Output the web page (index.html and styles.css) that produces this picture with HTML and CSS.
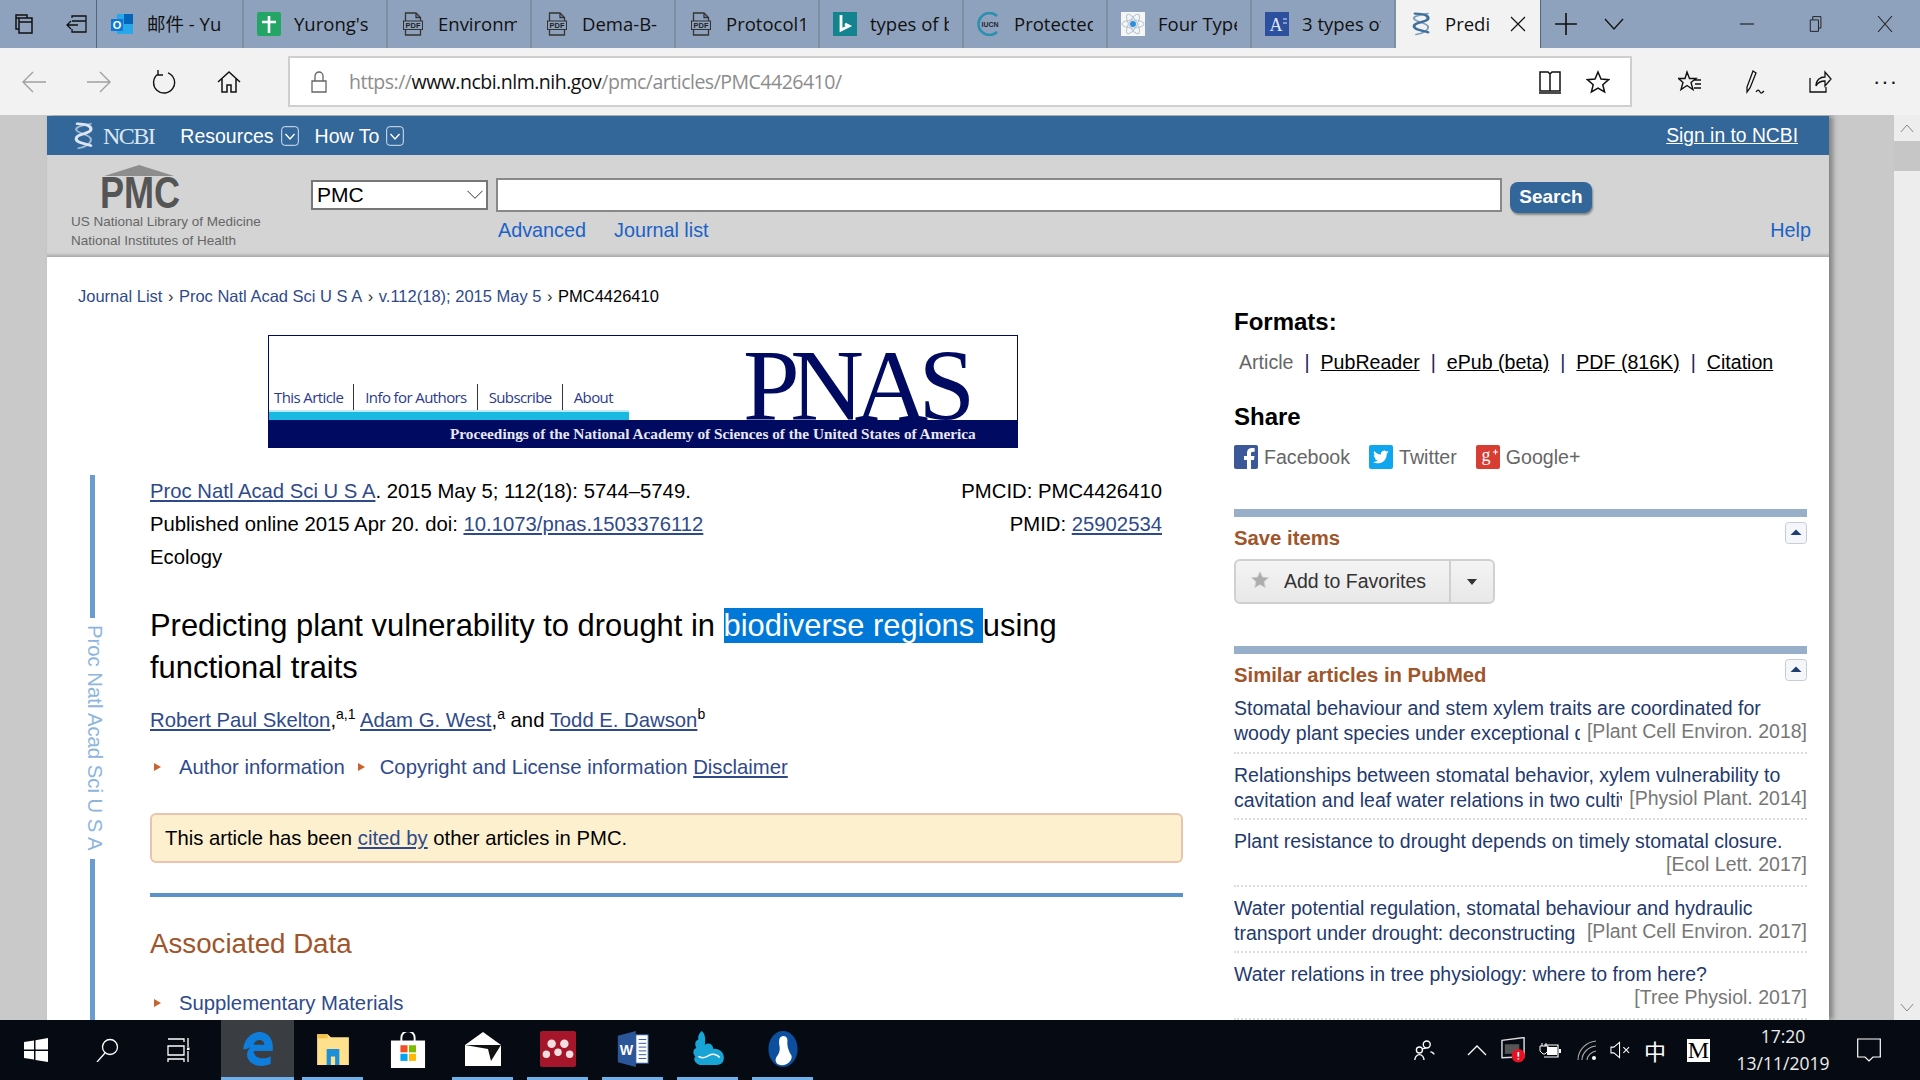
FILE: index.html
```html
<!DOCTYPE html>
<html lang="en">
<head>
    <meta charset="UTF-8">
    <title>Predicting plant vulnerability to drought in biodiverse regions using functional traits</title>
    <link rel="stylesheet" href="styles.css">
</head>
<body>
    <svg class="defs" width="0" height="0">
        <symbol id="pdf" viewBox="0 0 24 24">
            <path d="M4.5 23V1h10.500l4.500 4.500V23z M15 1v4.500h4.500" fill="none" stroke="#333" stroke-width="1.300"/>
            <rect x="2.500" y="9" width="19" height="8.500" fill="#8fa2bd" stroke="#333"/>
            <text x="12" y="15.500" font-size="7.500" font-weight="bold" text-anchor="middle" fill="#222" font-family="Liberation Sans">PDF</text>
        </symbol>
        <symbol id="helix" viewBox="0 0 24 32" preserveAspectRatio="none">
            <path d="M6 2C15 2 20 5 19 9C18 14 5 13 5 19C5 24 13 24 19 27" fill="none" stroke="currentColor" stroke-width="3" stroke-linecap="round"/>
            <path d="M19 2C12 4 4 5 5 9C6 13 17 14 19 19C20 24 14 29 7 30" fill="none" stroke="currentColor" stroke-width="2" stroke-linecap="round" opacity=".65"/>
        </symbol>
        <symbol id="up" viewBox="0 0 22 22">
            <rect x=".5" y=".5" width="21" height="21" rx="3" fill="#f4f6f9" stroke="#c4ccd6"/>
            <path d="M5.500 13L11 7.500l5.500 5.500z" fill="#1d3f72"/>
        </symbol>
    </svg>

    <!-- Browser tabs -->
    <div class="tabbar">
        <div class="tab-tools">
            <svg class="ic24" viewBox="0 0 24 24"><path d="M3 3h11v3H3z M6 6h13v4H6z M6 10h13v11H6z M3 6v11h3" fill="none" stroke="#111" stroke-width="1.500"/></svg>
            <svg class="ic24" viewBox="0 0 24 24"><path d="M7 6V4h14v16H7v-3 M7 9h14 M2 13h11 M6 9l-4 4 4 4" fill="none" stroke="#111" stroke-width="1.300"/></svg>
        </div>
        <div class="tab tab-first">
            <svg class="fav" viewBox="0 0 24 24"><rect x="7" y="2" width="16" height="20" fill="#28a8ea"/><rect x="14" y="2" width="9" height="10" fill="#0364b8"/><rect x="1" y="7" width="12" height="12" fill="#0f78d4"/><text x="7" y="17" font-size="11" font-weight="bold" fill="#fff" text-anchor="middle" font-family="Liberation Sans">O</text></svg>
            <span class="tab-name">邮件 - Yu</span>
        </div>
        <div class="tab">
            <svg class="fav" viewBox="0 0 24 24"><rect width="24" height="24" rx="2" fill="#23a566"/><path d="M12 4v17 M5 10h14" stroke="#fff" stroke-width="2.600"/></svg>
            <span class="tab-name">Yurong's</span>
        </div>
        <div class="tab"><svg class="fav"><use href="#pdf"/></svg><span class="tab-name">Environmental</span></div>
        <div class="tab"><svg class="fav"><use href="#pdf"/></svg><span class="tab-name">Dema-B-</span></div>
        <div class="tab"><svg class="fav"><use href="#pdf"/></svg><span class="tab-name">Protocol1</span></div>
        <div class="tab">
            <svg class="fav" viewBox="0 0 24 24"><rect width="24" height="24" fill="#13848f"/><path d="M8 3v15l8-4-4-2" fill="none" stroke="#fff" stroke-width="2.800"/></svg>
            <span class="tab-name">types of b</span>
        </div>
        <div class="tab">
            <svg class="fav" viewBox="0 0 24 24"><path d="M20 4A11 11 0 1 0 20 20" fill="none" stroke="#2a8fb0" stroke-width="2.500"/><text x="13" y="15" font-size="7" font-weight="bold" text-anchor="middle" fill="#223" font-family="Liberation Sans">IUCN</text></svg>
            <span class="tab-name">Protected</span>
        </div>
        <div class="tab">
            <svg class="fav" viewBox="0 0 24 24"><rect width="24" height="24" fill="#f4f6f8"/><g fill="none" stroke="#b7c3cf"><ellipse cx="12" cy="12" rx="11" ry="4" transform="rotate(60 12 12)"/><ellipse cx="12" cy="12" rx="11" ry="4" transform="rotate(-60 12 12)"/><ellipse cx="12" cy="12" rx="11" ry="4"/></g><circle cx="12" cy="12" r="3" fill="#2b8fe0"/></svg>
            <span class="tab-name">Four Types</span>
        </div>
        <div class="tab">
            <svg class="fav" viewBox="0 0 24 24"><rect width="24" height="24" fill="#2c4f9e"/><text x="11" y="19" font-size="18" fill="#dfe7f5" text-anchor="middle" font-family="Liberation Serif">A</text><path d="M18 7h4M18 11h4" stroke="#dfe7f5"/></svg>
            <span class="tab-name">3 types of</span>
        </div>
        <div class="tab tab-active">
            <svg class="fav helix-fav"><use href="#helix"/></svg>
            <span class="tab-name">Predi</span>
            <svg class="tab-close" viewBox="0 0 16 16"><path d="M1 1l14 14M15 1L1 15" stroke="#111" stroke-width="1.200"/></svg>
        </div>
        <div class="tab-extra">
            <svg class="ic24" viewBox="0 0 22 22"><path d="M11 1v20M1 11h20" stroke="#111" stroke-width="1.500"/></svg>
            <svg class="ic20" viewBox="0 0 20 20"><path d="M1 5l9 10 9-10" fill="none" stroke="#111" stroke-width="1.300"/></svg>
        </div>
        <div class="win-buttons">
            <svg class="ic16" viewBox="0 0 16 16"><path d="M1 8h14" stroke="#222" stroke-width="1.200"/></svg>
            <svg class="ic16" viewBox="0 0 16 22"><path d="M1 6h10v14H1z M4 6V2h10v14h-3" fill="none" stroke="#222" stroke-width="1.200"/></svg>
            <svg class="ic16" viewBox="0 0 16 16"><path d="M1 0l14 16M15 0L1 16" stroke="#222" stroke-width="1.100"/></svg>
        </div>
    </div>

    <!-- Address bar -->
    <div class="toolbar">
        <div class="nav-icons">
            <svg class="ic24" viewBox="0 0 24 24"><path d="M24 12H2M11 2L1 12l10 10" fill="none" stroke="#a0a0a0" stroke-width="1.400"/></svg>
            <svg class="ic24" viewBox="0 0 24 24"><path d="M0 12h22M13 2l10 10-10 10" fill="none" stroke="#a0a0a0" stroke-width="1.400"/></svg>
            <svg class="ic24" viewBox="0 0 24 24"><path d="M6 4A10.500 10.500 0 1 0 16 2.800 M6 0v5h5" fill="none" stroke="#111" stroke-width="1.400"/></svg>
            <svg class="ic24" viewBox="0 0 24 24"><path d="M1 12L12 2l11 10 M5 9v13h5v-7h4v7h5V9" fill="none" stroke="#111" stroke-width="1.500"/></svg>
        </div>
        <div class="address">
            <svg class="lock" viewBox="0 0 16 22"><path d="M1 10h14v11H1z M4 10V5a4 4 0 0 1 8 0v5" fill="none" stroke="#666" stroke-width="1.300"/></svg>
            <span class="url">https://<b>www.ncbi.nlm.nih.gov</b>/pmc/articles/PMC4426410/</span>
            <svg class="ic24 book" viewBox="0 0 24 24"><path d="M2 2h8l2 2 2-2h8v19H2z M12 4v17 M1 23h22" fill="none" stroke="#111" stroke-width="1.500"/></svg>
            <svg class="ic24" viewBox="0 0 24 24"><path d="M12 2l3 7 7.500.7-5.700 5 1.800 7.300-6.600-3.900L5.400 22l1.800-7.300-5.700-5L9 9z" fill="none" stroke="#111" stroke-width="1.500"/></svg>
        </div>
        <div class="tool-icons">
            <svg class="ic24" viewBox="0 0 24 24"><path d="M9 2l2.500 6.500H18l-5 4 2 7-6-4-6 4 2-7-4.500-4h6.500z M16 10h7M17 14h6M16 18h7" fill="none" stroke="#111" stroke-width="1.400"/></svg>
            <svg class="ic24" viewBox="0 0 24 24"><path d="M10 1l3 2-6 15-3 4 0-5z M13 22c2-3 3-2 4 0s2 1 4-1" fill="none" stroke="#111" stroke-width="1.300"/></svg>
            <svg class="ic24" viewBox="0 0 24 24"><path d="M2 8v14h16v-5 M8 16c0-6 4-9 9-9V2l6 7-6 7v-5c-4 0-7 1-9 5z" fill="none" stroke="#111" stroke-width="1.300"/></svg>
            <span class="more">···</span>
        </div>
    </div>

    <div class="viewport">
        <div class="page">
            <!-- NCBI bar -->
            <div class="ncbi-bar">
                <svg class="ncbi-helix"><use href="#helix"/></svg>
                <span class="ncbi-name">NCBI</span>
                <a class="menu">Resources</a>
                <svg class="menu-box" viewBox="0 0 18 20"><rect x=".7" y=".7" width="16.600" height="18.600" rx="3" fill="none" stroke="#dbe6f2"/><path d="M4.500 8l4.500 5 4.500-5" fill="none" stroke="#fff" stroke-width="1.400"/></svg>
                <a class="menu">How To</a>
                <svg class="menu-box" viewBox="0 0 18 20"><rect x=".7" y=".7" width="16.600" height="18.600" rx="3" fill="none" stroke="#dbe6f2"/><path d="M4.500 8l4.500 5 4.500-5" fill="none" stroke="#fff" stroke-width="1.400"/></svg>
                <a class="sign-in">Sign in to NCBI</a>
            </div>

            <!-- PMC search header -->
            <div class="pmc-header">
                <div class="pmc-brand">
                    <div class="pmc-logo">
                        <svg class="pmc-roof" viewBox="0 0 80 12"><path d="M0 12L38 0l38 12z" fill="#8d8d8d"/></svg>
                        <span class="pmc-mark">PMC</span>
                    </div>
                    <div class="pmc-org">US National Library of Medicine</div>
                    <div class="pmc-org">National Institutes of Health</div>
                </div>
                <div class="pmc-search">
                    <div class="search-row">
                        <div class="db-select">PMC
                            <svg class="db-arrow" viewBox="0 0 20 12"><path d="M1 1l9 9 9-9" fill="none" stroke="#333" stroke-width="1.200"/></svg>
                        </div>
                        <div class="search-input"></div>
                        <div class="search-btn">Search</div>
                    </div>
                    <div class="search-links">
                        <a>Advanced</a>
                        <a>Journal list</a>
                        <a class="help">Help</a>
                    </div>
                </div>
            </div>

            <div class="content">
                <div class="main">
                    <div class="crumbs">
                        <a>Journal List</a><i>›</i><a>Proc Natl Acad Sci U S A</a><i>›</i><a>v.112(18); 2015 May 5</a><i>›</i><span>PMC4426410</span>
                    </div>

                    <div class="banner">
                        <div class="banner-top">
                            <div class="banner-nav">
                                <div class="banner-links">
                                    <span>This Article</span><span>Info for Authors</span><span>Subscribe</span><span>About</span>
                                </div>
                                <div class="banner-cyan"></div>
                            </div>
                            <div class="banner-title">PNAS</div>
                        </div>
                        <div class="banner-band">Proceedings of the National Academy of Sciences of the United States of America</div>
                    </div>

                    <div class="article-wrap">
                        <div class="rail">
                            <div class="rail-line rail-top"></div>
                            <div class="rail-text">Proc Natl Acad Sci U S A</div>
                            <div class="rail-line rail-bottom"></div>
                        </div>
                        <div class="article">
                            <div class="cite">
                                <div>
                                    <div><a class="lnk">Proc Natl Acad Sci U S A</a>. 2015 May 5; 112(18): 5744–5749.</div>
                                    <div>Published online 2015 Apr 20. doi: <a class="lnk">10.1073/pnas.1503376112</a></div>
                                    <div>Ecology</div>
                                </div>
                                <div class="cite-ids">
                                    <div>PMCID: PMC4426410</div>
                                    <div>PMID: <a class="lnk">25902534</a></div>
                                </div>
                            </div>
                            <h1 class="title">Predicting plant vulnerability to drought in <span class="sel">biodiverse regions </span>using functional traits</h1>
                            <div class="authors">
                                <a class="lnk">Robert Paul Skelton</a>,<sup>a,1</sup> <a class="lnk">Adam G. West</a>,<sup>a</sup> and <a class="lnk">Todd E. Dawson</a><sup>b</sup>
                            </div>
                            <div class="info-row">
                                <span class="tri"></span><a class="plain info-a">Author information</a>
                                <span class="tri"></span><a class="plain info-b">Copyright and License information</a>&nbsp;<a class="lnk">Disclaimer</a>
                            </div>
                            <div class="notice">This article has been <a class="lnk">cited by</a> other articles in PMC.</div>
                            <div class="section-rule"></div>
                            <h2 class="section-head">Associated Data</h2>
                            <div class="supp"><span class="tri"></span><a class="plain info-a">Supplementary Materials</a></div>
                        </div>
                    </div>
                </div>

                <!-- Right column -->
                <div class="side">
                    <h3 class="side-head formats-head">Formats:</h3>
                    <div class="formats">
                        <span class="fmt-cur">Article</span><i>|</i><a>PubReader</a><i>|</i><a>ePub (beta)</a><i>|</i><a>PDF (816K)</a><i>|</i><a>Citation</a>
                    </div>
                    <h3 class="side-head share-head">Share</h3>
                    <div class="share">
                        <span class="share-item">
                            <svg class="soc" viewBox="0 0 24 24"><rect width="24" height="24" rx="2" fill="#3b5998"/><path d="M17 24v-9h3l.500-4H17V8.500c0-1 .500-1.800 2-1.800h1.700V3.300C20 3.200 19 3 17.800 3 15 3 13 4.800 13 7.800V11h-3v4h3v9z" fill="#fff"/></svg>Facebook</span>
                        <span class="share-item">
                            <svg class="soc" viewBox="0 0 24 24"><rect width="24" height="24" rx="2" fill="#0fa5ef"/><path d="M20 7c-.600.300-1.200.500-1.900.500.700-.400 1.200-1 1.400-1.800-.600.400-1.300.600-2 .800a3.300 3.300 0 0 0-5.600 3C9.200 9.300 6.800 8 5.200 6c-.900 1.500-.400 3.400 1 4.400-.500 0-1-.200-1.500-.400 0 1.600 1.100 3 2.600 3.300-.500.100-1 .100-1.500 0 .400 1.300 1.600 2.200 3.100 2.300-1.400 1.100-3.200 1.600-4.900 1.400 4.900 3.100 13.800 1.200 13.800-8.400.700-.500 1.300-1 1.700-1.600z" fill="#fff"/></svg>Twitter</span>
                        <span class="share-item">
                            <svg class="soc" viewBox="0 0 24 24"><rect width="24" height="24" rx="2" fill="#d73d32"/><text x="10" y="16" font-size="18" fill="#fff" text-anchor="middle" font-family="Liberation Serif">g</text><path d="M17 7h5M19.500 4.500v5" stroke="#fff" stroke-width="1.200"/></svg>Google+</span>
                    </div>

                    <div class="portlet save-portlet">
                        <div class="portlet-head">
                            <span>Save items</span>
                            <svg class="collapse"><use href="#up"/></svg>
                        </div>
                        <div class="fav-btn">
                            <div class="fav-main">
                                <svg class="fav-star" viewBox="0 0 24 24"><path d="M12 1l3.300 7.300 7.700.8-5.800 5.200 1.700 7.700-6.900-4-6.900 4 1.700-7.700L1 9.100l7.700-.8z" fill="#adadad" stroke="#c8c8c8"/></svg>
                                Add to Favorites
                            </div>
                            <div class="fav-drop"><span class="caret"></span></div>
                        </div>
                    </div>

                    <div class="portlet sim-portlet">
                        <div class="portlet-head">
                            <span>Similar articles in PubMed</span>
                            <svg class="collapse"><use href="#up"/></svg>
                        </div>
                        <div class="sim">
                            <a class="sim-line">Stomatal behaviour and stem xylem traits are coordinated for</a>
                            <div class="sim-second"><a class="sim-clip">woody plant species under exceptional drought</a><span class="sim-src">[Plant Cell Environ. 2018]</span></div>
                        </div>
                        <div class="sim">
                            <a class="sim-line">Relationships between stomatal behavior, xylem vulnerability to</a>
                            <div class="sim-second"><a class="sim-clip">cavitation and leaf water relations in two cultivars</a><span class="sim-src">[Physiol Plant. 2014]</span></div>
                        </div>
                        <div class="sim">
                            <a class="sim-line">Plant resistance to drought depends on timely stomatal closure.</a>
                            <div class="sim-second"><span class="sim-clip"></span><span class="sim-src">[Ecol Lett. 2017]</span></div>
                        </div>
                        <div class="sim">
                            <a class="sim-line">Water potential regulation, stomatal behaviour and hydraulic</a>
                            <div class="sim-second"><a class="sim-clip">transport under drought: deconstructing</a><span class="sim-src">[Plant Cell Environ. 2017]</span></div>
                        </div>
                        <div class="sim">
                            <a class="sim-line">Water relations in tree physiology: where to from here?</a>
                            <div class="sim-second"><span class="sim-clip"></span><span class="sim-src">[Tree Physiol. 2017]</span></div>
                        </div>
                    </div>
                </div>
            </div>
        </div>

        <div class="scrollbar">
            <svg class="sb-arrow" viewBox="0 0 16 10"><path d="M1 9l7-8 7 8" fill="none" stroke="#777"/></svg>
            <div class="sb-thumb"></div>
            <svg class="sb-arrow sb-down" viewBox="0 0 16 10"><path d="M1 1l7 8 7-8" fill="none" stroke="#777"/></svg>
        </div>
    </div>

    <!-- Windows taskbar -->
    <div class="taskbar">
        <div class="task-left">
            <svg class="tb-sys" viewBox="0 0 24 24"><path d="M0 4l10-1.500V11.500H0z M11.500 2.300L24 0v11.500H11.500z M0 13h10v8.500L0 20z M11.500 13H24v11l-12.500-2z" fill="#fff"/></svg>
            <svg class="tb-sys" viewBox="0 0 24 24"><circle cx="15" cy="9" r="7.500" fill="none" stroke="#fff" stroke-width="1.300"/><path d="M10 15L2 24" stroke="#fff" stroke-width="1.300"/></svg>
            <svg class="tb-sys" viewBox="0 0 24 24"><path d="M2 1h16v3 M2 8h16v9H2z M2 24v-3h16v3 M22 0v9 M22 13v11" fill="none" stroke="#fff" stroke-width="1.300"/><rect x="21" y="9.500" width="2.500" height="2.500" fill="#fff"/></svg>
        </div>
        <div class="task-app task-edge">
            <svg class="tb-app" viewBox="0 0 30 34"><path d="M1 17C2 6 11 0 18 1c7 1 11 7 11 14v4H11c0 6 8 9 16 5v7c-9 4-19 2-22-6-1-3 0-7 3-10-2 1-5 3-7 2zM11 13h10c0-6-9-6-10 0z" fill="#0f7ddb"/></svg>
        </div>
        <div class="task-app task-on">
            <svg class="tb-app" viewBox="0 0 32 34"><path d="M1 3h10l3 3h17v26H1z" fill="#ffe08c"/><path d="M1 3h10v4H1z" fill="#f0c24a"/><path d="M10 32V17h12v15h-4v-8h-4v8z" fill="#1c8fd8"/></svg>
        </div>
        <div class="task-app">
            <svg class="tb-app" viewBox="0 0 36 38"><path d="M11 10V6a7 7 0 0 1 14 0v4" fill="none" stroke="#fff" stroke-width="2"/><rect y="9" width="36" height="29" fill="#fff"/><rect x="10" y="14" width="7.500" height="7.500" fill="#f25022"/><rect x="19" y="14" width="7.500" height="7.500" fill="#7fba00"/><rect x="10" y="23" width="7.500" height="7.500" fill="#00a4ef"/><rect x="19" y="23" width="7.500" height="7.500" fill="#ffb900"/></svg>
        </div>
        <div class="task-app task-on">
            <svg class="tb-app" viewBox="0 0 36 34"><path d="M0 13L18 0l18 13v21H0z" fill="#fff"/><path d="M0 13h36L26 29l-3-12z" fill="#111"/></svg>
        </div>
        <div class="task-app task-on">
            <svg class="tb-app" viewBox="0 0 34 34"><rect width="34" height="34" rx="2" fill="#a6162b"/><g fill="#f3dfe2"><circle cx="11" cy="12" r="4"/><circle cx="23" cy="12" r="4"/><circle cx="17" cy="20" r="3.500"/><circle cx="6" cy="22" r="3.500"/><circle cx="28" cy="22" r="3.500"/></g></svg>
        </div>
        <div class="task-app task-on">
            <svg class="tb-app" viewBox="0 0 32 38"><path d="M0 5L19 0v38L0 33z" fill="#2b579a"/><rect x="19" y="4" width="13" height="30" fill="#fff" stroke="#2b579a"/><path d="M22 9h8M22 13h8M22 17h8M22 21h8M22 25h8M22 29h8" stroke="#2b579a"/><text x="9" y="25" font-size="15" font-weight="bold" fill="#fff" text-anchor="middle" font-family="Liberation Sans">W</text></svg>
        </div>
        <div class="task-app task-on">
            <svg class="tb-app" viewBox="0 0 32 34"><path d="M8 32C3 30 2 26 4 24c-3-3-2-7 1-8-2-4-1-7 2-8-1-3 1-6 3-8 3 2 4 7 3 13 4-3 8 0 8 4 5-1 10 3 10 8s-3 7-7 7z" fill="#19a4d6"/><path d="M7 24c3 2 7 1 10-1s8-1 10 2" fill="none" stroke="#fff" stroke-width="1.500"/></svg>
        </div>
        <div class="task-app task-on">
            <svg class="tb-app" viewBox="0 0 36 42"><ellipse cx="18" cy="21" rx="17" ry="21" fill="#0b4f9e"/><path d="M17 6c5-1 7 3 6 8 0 5 2 10 5 15 1 5-4 11-11 11-6 0-9-4-7-9 3-4 5-8 4-13-1-6-1-11 3-12z" fill="#fff"/></svg>
        </div>

        <div class="tray">
            <svg class="tr-people" viewBox="0 0 24 24"><circle cx="15" cy="6" r="3.800" fill="none" stroke="#fff" stroke-width="1.500"/><circle cx="7" cy="12" r="3.300" fill="none" stroke="#fff" stroke-width="1.500"/><path d="M19 14c2 0 4 2 4 3 M2 23c0-3 2-6 5-6s5 3 5 6 M11 11c1-1 2-1 3-1" fill="none" stroke="#fff" stroke-width="1.500"/></svg>
            <svg class="tr-caret" viewBox="0 0 20 12"><path d="M1 11l9-9 9 9" fill="none" stroke="#fff" stroke-width="1.300"/></svg>
            <svg class="tr-sec" viewBox="0 0 26 26"><path d="M1 3L24 0v20L1 21z" fill="none" stroke="#ddd" stroke-width="1.500"/><path d="M4 7h15v10H4z" fill="#555"/><circle cx="18" cy="19" r="7" fill="#e81123"/><path d="M18 15v5M18 21.500v1.500" stroke="#fff" stroke-width="1.800"/></svg>
            <svg class="tr-batt" viewBox="0 0 24 16"><path d="M5 1v3M9 1v3" stroke="#fff"/><path d="M3 4h8v5l-3 3H6L3 9z" fill="none" stroke="#fff"/><path d="M7 3h14v12H7" fill="none" stroke="#fff" stroke-width="1.200"/><rect x="10" y="5" width="10" height="8" fill="#fff"/><rect x="22" y="7" width="2" height="4" fill="#fff"/></svg>
            <svg class="tr-wifi" viewBox="0 0 20 20"><path d="M1 20C1 10 9 2 19 1 M5 20C5 13 11 7 19 6 M10 20c0-4 4-8 9-9" fill="none" stroke="#aaa" stroke-width="1.100"/><circle cx="17" cy="18" r="2" fill="#fff"/></svg>
            <svg class="tr-vol" viewBox="0 0 22 18"><path d="M1 6h3l6-5v16l-6-5H1z" fill="none" stroke="#fff" stroke-width="1.100"/><path d="M14 6l6 6M20 6l-6 6" stroke="#fff" stroke-width="1.100"/></svg>
            <span class="tr-ime">中</span>
            <span class="tr-m">M</span>
            <div class="clock">
                <div>17:20</div>
                <div>13/11/2019</div>
            </div>
            <svg class="tr-note" viewBox="0 0 24 24"><path d="M.7 1h22.600v18h-7.300L12 23l-4-4H.7z" fill="none" stroke="#fff" stroke-width="1.200"/></svg>
        </div>
    </div>
</body>
</html>
```

FILE: styles.css
```css
html, body {
    margin: 0;
    height: 100%;
}
body {
    width: 1920px;
    height: 1080px;
    overflow: hidden;
    display: flex;
    flex-direction: column;
    font-family: "Liberation Sans", Arial, sans-serif;
    color: #000;
}
.defs {
    position: absolute;
}
svg {
    display: block;
    flex: none;
}
a {
    text-decoration: none;
}
.ic16 { width: 16px; height: 18px; }
.ic20 { width: 20px; height: 20px; }
.ic24 { width: 24px; height: 24px; }

/* Tabs */
.tabbar {
    height: 48px;
    flex: none;
    display: flex;
    background: #8fa2bd;
    font-family: "Open Sans", "Noto Sans CJK SC", sans-serif;
    font-size: 18.5px;
    color: #111;
}
.tab-tools {
    width: 97px;
    box-sizing: border-box;
    display: flex;
    align-items: center;
    gap: 28px;
    padding-left: 13px;
    border-right: 1px solid #55657c;
}
.tab {
    width: 144px;
    box-sizing: border-box;
    display: flex;
    align-items: center;
    gap: 13px;
    padding: 0 13px 0 13px;
    border-right: 2px solid #7f8ea3;
}
.tab-first {
    width: 147px;
}
.fav {
    width: 24px;
    height: 24px;
}
.helix-fav {
    color: #3e6f9c;
}
.tab-name {
    flex: 1;
    overflow: hidden;
    white-space: nowrap;
    margin-top: -2px;
}
.tab-active {
    background: #f2f2f2;
    border-right: 0;
    gap: 12px;
    padding-right: 14px;
}
.tab-close {
    width: 16px;
    height: 16px;
}
.tab-extra {
    display: flex;
    align-items: center;
    gap: 26px;
    padding-left: 13px;
    border-left: 1px solid #55657c;
}
.win-buttons {
    margin-left: auto;
    display: flex;
    align-items: center;
    gap: 53px;
    padding-right: 27px;
}

/* Address bar */
.toolbar {
    height: 67px;
    flex: none;
    box-sizing: border-box;
    display: flex;
    align-items: center;
    padding: 0 0 0 22px;
    background: #f2f2f2;
}
.nav-icons {
    display: flex;
    gap: 41px;
    width: 266px;
}
.address {
    width: 1344px;
    height: 51px;
    box-sizing: border-box;
    display: flex;
    align-items: center;
    background: #fff;
    border: 2px solid #cfcfcf;
    padding: 0 20px 0 21px;
}
.lock {
    width: 16px;
    height: 22px;
    margin-right: 22px;
}
.url {
    flex: 1;
    font-family: "Open Sans", sans-serif;
    font-size: 19.5px;
    letter-spacing: -0.5px;
    color: #8c8c8c;
}
.url b {
    font-weight: normal;
    color: #111;
}
.address .book {
    margin-right: 24px;
}
.tool-icons {
    display: flex;
    align-items: center;
    gap: 41px;
    margin-left: 46px;
}
.more {
    font-size: 22px;
    letter-spacing: 1px;
    color: #111;
}

/* Page area */
.viewport {
    flex: 1;
    min-height: 0;
    display: flex;
    background: #c9c9c9;
    padding-left: 47px;
    padding-top: 1px;
    overflow: hidden;
}
.page {
    width: 1782px;
    background: #fff;
    box-shadow: 4px 0 5px rgba(0, 0, 0, 0.35);
    overflow: hidden;
}
.scrollbar {
    width: 26px;
    margin-left: 65px;
    margin-top: -1px;
    background: #ededed;
    display: flex;
    flex-direction: column;
    align-items: center;
}
.sb-arrow {
    width: 14px;
    height: 9px;
    margin-top: 9px;
}
.sb-thumb {
    width: 100%;
    height: 30px;
    margin-top: 8px;
    background: #c6c6c6;
}
.sb-down {
    margin-top: auto;
    margin-bottom: 8px;
}

/* NCBI bar */
.ncbi-bar {
    height: 39px;
    display: flex;
    align-items: center;
    background: #336699;
    color: #fff;
    padding: 1px 31px 0 24px;
    box-sizing: border-box;
}
.ncbi-helix {
    width: 25px;
    height: 28px;
    color: #dbe6f2;
}
.ncbi-name {
    font-family: "Liberation Serif", serif;
    font-size: 24px;
    color: #dbe6f2;
    margin: 0 26px 0 7px;
    letter-spacing: -1.5px;
}
.menu {
    font-size: 19.5px;
    color: #fff;
}
.menu-box {
    width: 18px;
    height: 20px;
    margin: 0 16px 0 7px;
}
.sign-in {
    margin-left: auto;
    font-size: 19.3px;
    color: #fff;
    text-decoration: underline;
}

/* PMC header */
.pmc-header {
    height: 102px;
    box-sizing: border-box;
    display: flex;
    background: #d4d4d4;
    box-shadow: inset 0 -4px 3px -2px #a8a8a8;
}
.pmc-brand {
    width: 264px;
    padding: 10px 0 0 24px;
    box-sizing: border-box;
    color: #666;
    font-size: 13.5px;
}
.pmc-logo {
    position: relative;
    height: 47px;
    margin-left: 29px;
}
.pmc-roof {
    position: absolute;
    left: 2px;
    top: 0;
    width: 78px;
    height: 11px;
}
.pmc-mark {
    position: absolute;
    left: 0;
    top: 6px;
    font-family: "Liberation Sans", sans-serif;
    font-size: 44px;
    line-height: 44px;
    font-weight: bold;
    color: #555;
    transform: scaleX(0.82);
    transform-origin: left center;
}
.pmc-org {
    line-height: 19px;
    white-space: nowrap;
}
.pmc-search {
    flex: 1;
    padding: 22px 18px 0 0;
}
.search-row {
    display: flex;
    align-items: center;
}
.db-select {
    width: 177px;
    height: 30px;
    box-sizing: border-box;
    display: flex;
    align-items: center;
    justify-content: space-between;
    background: #fff;
    border: 2px solid #777;
    font-size: 21px;
    padding: 0 2px 0 4px;
}
.db-arrow {
    width: 18px;
    height: 10px;
}
.search-input {
    width: 1006px;
    height: 34px;
    box-sizing: border-box;
    margin-left: 8px;
    background: #fff;
    border: 2px solid #888;
}
.search-btn {
    width: 82px;
    height: 31px;
    margin: 5px 0 0 8px;
    border-radius: 8px;
    background: #336699;
    color: #fff;
    font-size: 19px;
    font-weight: bold;
    line-height: 30px;
    text-align: center;
    box-shadow: 1px 2px 2px #888;
}
.search-links {
    display: flex;
    gap: 28px;
    padding: 5px 0 0 187px;
    font-size: 19.8px;
    line-height: 24px;
}
.search-links a {
    color: #1a62c8;
}
.search-links .help {
    margin-left: auto;
}

/* Main column */
.content {
    display: flex;
}
.main {
    width: 1136px;
    box-sizing: border-box;
    padding: 28px 0 0 31px;
}
.crumbs {
    font-size: 16.5px;
    line-height: 22px;
    display: flex;
    white-space: nowrap;
    color: #000;
}
.crumbs a {
    color: #2f4a8a;
}
.crumbs i {
    font-style: normal;
    margin: 0 5.5px;
    color: #333;
}
.banner {
    margin: 28px 0 0 190px;
    width: 750px;
    height: 113px;
    box-sizing: border-box;
    border: 1px solid #000a60;
    display: flex;
    flex-direction: column;
}
.banner-top {
    flex: 1;
    display: flex;
    align-items: flex-end;
    min-height: 0;
}
.banner-nav {
    width: 360px;
}
.banner-links {
    display: flex;
    font-family: "Open Sans", sans-serif;
    font-size: 15px;
    letter-spacing: -0.6px;
    color: #2b3a8c;
    line-height: 26px;
}
.banner-links span {
    padding: 0 10px 0 11px;
    border-right: 1px solid #334;
    white-space: nowrap;
}
.banner-links span:first-child {
    padding-left: 5px;
}
.banner-links span:last-child {
    border-right: 0;
}
.banner-cyan {
    height: 10px;
    background: #1ab9e2;
    border-top: 2px solid #bfeaf5;
    box-sizing: border-box;
}
.banner-title {
    font-family: "Liberation Serif", serif;
    font-size: 102px;
    line-height: 68px;
    height: 68px;
    letter-spacing: -9.5px;
    color: #000a60;
    margin-left: 114px;
    white-space: nowrap;
}
.banner-band {
    height: 27px;
    flex: none;
    background: #000a60;
    color: #e8e8f0;
    font-family: "Liberation Serif", serif;
    font-size: 15.3px;
    font-weight: bold;
    line-height: 28px;
    padding-left: 181px;
    white-space: nowrap;
}
.article-wrap {
    display: flex;
    margin-top: 27px;
}
.rail {
    width: 66px;
    margin-left: 6px;
    display: flex;
    flex-direction: column;
    height: 560px;
    flex: none;
}
.rail-line {
    width: 5px;
    margin-left: 6px;
    background: #6a9ccf;
}
.rail-top {
    height: 143px;
}
.rail-bottom {
    flex: 1;
}
.rail-text {
    writing-mode: vertical-rl;
    align-self: flex-start;
    margin-left: 2px;
    font-size: 20.3px;
    line-height: 18px;
    color: #8db5de;
    padding: 7px 0 9px;
    white-space: nowrap;
}
.article {
    flex: 1;
    min-width: 0;
    font-size: 20.3px;
}
.cite {
    display: flex;
    justify-content: space-between;
    line-height: 33px;
}
.cite-ids {
    text-align: right;
    padding-right: 21px;
}
.lnk {
    color: #2f4a8a;
    text-decoration: underline;
}
.title {
    margin: 31px 0 0;
    font-size: 30.9px;
    font-weight: normal;
    line-height: 42px;
}
.sel {
    background: #0078d7;
    color: #fff;
}
.authors {
    margin-top: 18px;
    line-height: 26px;
}
.authors sup {
    font-size: 14px;
    line-height: 0;
}
.info-row {
    margin-top: 21px;
    line-height: 26px;
    display: flex;
    align-items: center;
    white-space: pre;
}
.tri {
    width: 0;
    height: 0;
    border-left: 7px solid #c8622e;
    border-top: 4px solid transparent;
    border-bottom: 4px solid transparent;
    margin: 0 0 0 4px;
}
.plain {
    color: #2f4a8a;
}
.info-a {
    margin: 0 9px 0 18px;
}
.info-b {
    margin-left: 15px;
}
.notice {
    margin-top: 33px;
    height: 50px;
    box-sizing: border-box;
    border: 2px solid #e8c4ae;
    border-radius: 6px;
    background: #fdf0cf;
    padding: 0 13px;
    line-height: 46px;
}
.section-rule {
    height: 4px;
    margin-top: 30px;
    background: #5b93c9;
}
.section-head {
    margin: 31px 0 0;
    font-size: 27.7px;
    font-weight: normal;
    line-height: 32px;
    color: #a0552b;
}
.supp {
    margin-top: 30px;
    display: flex;
    align-items: center;
    line-height: 26px;
}

/* Right column */
.side {
    width: 573px;
    margin-left: 51px;
    padding-top: 51px;
    flex: none;
}
.side-head {
    margin: 0;
    font-size: 24px;
    font-weight: bold;
    line-height: 28px;
}
.formats {
    display: flex;
    margin-top: 12px;
    padding-left: 5px;
    font-size: 19.6px;
    line-height: 28px;
    white-space: nowrap;
}
.formats a {
    color: #000;
    text-decoration: underline;
}
.formats i {
    font-style: normal;
    margin: 0 11px;
    color: #225;
}
.fmt-cur {
    color: #666;
}
.share-head {
    margin-top: 27px;
}
.share {
    display: flex;
    gap: 19px;
    margin-top: 14px;
    font-size: 19.6px;
    line-height: 24px;
    color: #666;
}
.share-item {
    display: flex;
    gap: 6px;
}
.soc {
    width: 24px;
    height: 24px;
}
.portlet {
    border-top: 8px solid #98afc9;
}
.save-portlet {
    margin-top: 40px;
}
.sim-portlet {
    margin-top: 42px;
}
.portlet-head {
    display: flex;
    justify-content: space-between;
    font-size: 20.3px;
    font-weight: bold;
    color: #a0552b;
    line-height: 26px;
    padding-top: 8px;
    position: relative;
}
.collapse {
    position: absolute;
    right: 0;
    top: 5px;
    width: 22px;
    height: 22px;
}
.fav-btn {
    display: flex;
    width: 261px;
    height: 45px;
    box-sizing: border-box;
    margin-top: 8px;
    border: 2px solid #d0d0d0;
    border-radius: 6px;
    background: linear-gradient(#f4f4f4, #e8e8e8);
    font-size: 19.5px;
    color: #333;
}
.fav-main {
    width: 215px;
    flex: none;
    box-sizing: border-box;
    display: flex;
    align-items: center;
    gap: 15px;
    padding-left: 15px;
    border-right: 2px solid #cfcfcf;
}
.fav-star {
    width: 18px;
    height: 20px;
    margin-bottom: 3px;
}
.fav-drop {
    flex: 1;
    display: flex;
    align-items: center;
    justify-content: center;
}
.caret {
    border-top: 6px solid #333;
    border-left: 5px solid transparent;
    border-right: 5px solid transparent;
}
.sim-portlet .portlet-head {
    height: 29px;
    box-sizing: border-box;
    margin-bottom: 4px;
}
.sim {
    height: 66.5px;
    box-sizing: border-box;
    padding-top: 9px;
    border-bottom: 2px dotted #ddd;
    font-size: 19.5px;
    line-height: 25px;
}
.sim a {
    color: #1f3a6e;
}
.sim-line {
    display: block;
    white-space: nowrap;
    overflow: hidden;
}
.sim-second {
    display: flex;
    gap: 7px;
}
.sim-clip {
    flex: 1;
    min-width: 0;
    white-space: nowrap;
    overflow: hidden;
}
.sim-src {
    flex: none;
    color: #777;
    margin-top: -2px;
    white-space: nowrap;
}

/* Taskbar */
.taskbar {
    height: 60px;
    flex: none;
    display: flex;
    background: #060b13;
    color: #fff;
}
.task-left {
    width: 221px;
    display: flex;
    align-items: center;
    gap: 47px;
    padding-left: 24px;
    box-sizing: border-box;
}
.tb-sys {
    width: 24px;
    height: 24px;
}
.task-app {
    width: 61px;
    margin-right: 14px;
    box-sizing: border-box;
    display: flex;
    align-items: center;
    justify-content: center;
}
.task-on {
    border-bottom: 3px solid #6fb0e8;
}
.task-edge {
    width: 73px;
    margin-right: 8px;
    background: #3a3d42;
    border-bottom: 3px solid #6fb0e8;
}
.tb-app {
    width: 36px;
    height: 36px;
}
.tray {
    margin-left: auto;
    display: flex;
    align-items: center;
    width: 520px;
    padding-left: 13px;
    box-sizing: border-box;
}
.tr-people { width: 22px; height: 22px; margin-right: 32px; }
.tr-caret { width: 20px; height: 12px; margin-right: 14px; }
.tr-sec { width: 25px; height: 26px; margin-right: 11px; }
.tr-batt { width: 24px; height: 16px; margin-right: 16px; }
.tr-wifi { width: 20px; height: 20px; margin-right: 13px; }
.tr-vol { width: 21px; height: 18px; margin-right: 13px; }
.tr-ime {
    font-family: "Noto Sans CJK SC", sans-serif;
    font-size: 22px;
    line-height: 24px;
    margin-right: 21px;
}
.tr-m {
    width: 23px;
    height: 23px;
    background: #fff;
    color: #000;
    font-family: "Liberation Serif", serif;
    font-size: 24px;
    line-height: 23px;
    text-align: center;
    margin-right: 24px;
}
.clock {
    width: 98px;
    text-align: center;
    font-family: "Open Sans", sans-serif;
    font-size: 17.5px;
    line-height: 27px;
    color: #eee;
}
.tr-note {
    width: 24px;
    height: 24px;
    margin-left: 25px;
}
```
